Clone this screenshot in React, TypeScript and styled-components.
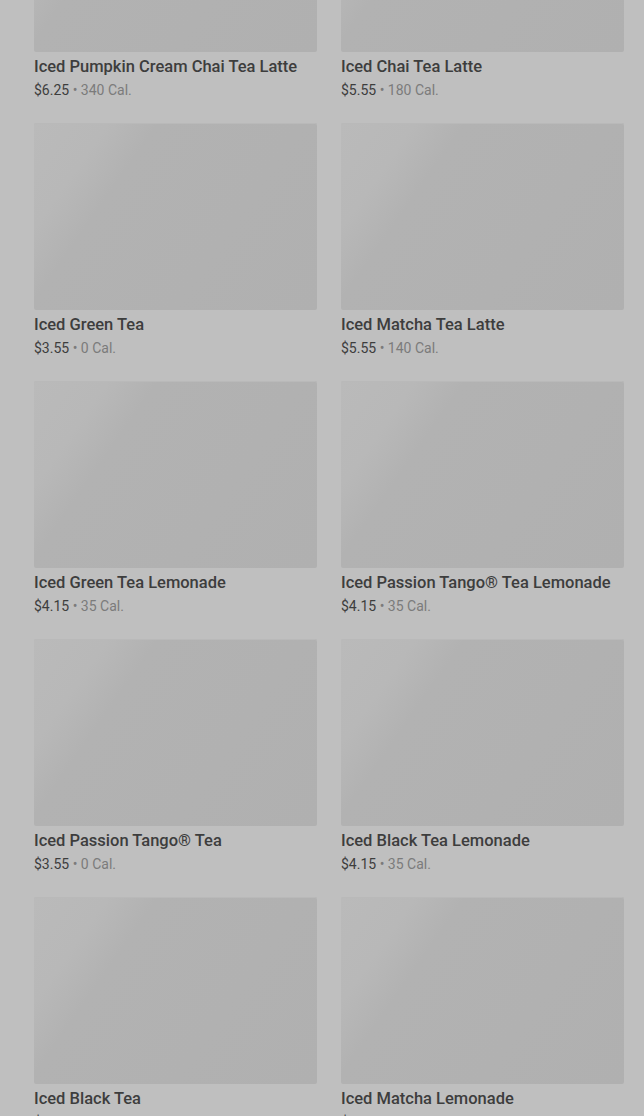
import React, { useLayoutEffect, useRef } from "react";
import styled, { createGlobalStyle } from "styled-components";

interface Drink {
    name: string,
    price: string,
    calories: number
}

const drinks: Drink[] = [
    { name: "Iced Pumpkin Cream Chai Tea Latte", price: "$6.25", calories: 340 },
    { name: "Iced Chai Tea Latte", price: "$5.55", calories: 180 },
    { name: "Iced Green Tea", price: "$3.55", calories: 0 },
    { name: "Iced Matcha Tea Latte", price: "$5.55", calories: 140 },
    { name: "Iced Green Tea Lemonade", price: "$4.15", calories: 35 },
    { name: "Iced Passion Tango® Tea Lemonade", price: "$4.15", calories: 35 },
    { name: "Iced Passion Tango® Tea", price: "$3.55", calories: 0 },
    { name: "Iced Black Tea Lemonade", price: "$4.15", calories: 35 },
    { name: "Iced Black Tea", price: "$3.55", calories: 0 },
    { name: "Iced Matcha Lemonade", price: "$4.15", calories: 35 },
];

const GlobalStyle = createGlobalStyle`
    html, body {
        margin: 0;
        padding: 0;
        background: #bfbfbf;
        font-family: Roboto, "Liberation Sans", Arial, sans-serif;
    }
`;

const Scroller = styled.div`
    height: 100vh;
    overflow: hidden;
    background: #bfbfbf;
`;

const Grid = styled.div`
    display: grid;
    grid-template-columns: 283px 283px;
    column-gap: 24px;
    row-gap: 23px;
    padding: 0 20px 40px 34px;
`;

const Card = styled.div`
    display: flex;
    flex-direction: column;
`;

const Thumb = styled.div`
    height: 187px;
    border-radius: 2px;
    background: linear-gradient(125deg, #bababa 0%, #b8b8b8 18%, #b2b2b2 30%, #b0b0b0 100%);
    box-shadow: inset 0 1px 0 #b9b9b9;
`;

const Title = styled.div`
    margin-top: 4px;
    font-size: 16.5px;
    line-height: 22px;
    font-weight: 500;
    color: #3d3d3d;
    white-space: nowrap;
`;

const Meta = styled.div`
    margin-top: 2px;
    font-size: 14px;
    line-height: 20px;
    color: #3d3d3d;
`;

const Cal = styled.span`
    color: #7b7b7b;
`;

const App = () => {
    const ref = useRef<HTMLDivElement>(null)

    useLayoutEffect(() => {
        // list is scrolled a little into the menu
        if (ref.current) ref.current.scrollTop = 135;
    }, []);

    return (
        <>
            <GlobalStyle />
            <Scroller ref={ref}>
                <Grid>
                    {drinks.map(d => (
                        <Card key={d.name}>
                            <Thumb />
                            <Title>{d.name}</Title>
                            <Meta>{d.price} <Cal>• {d.calories} Cal.</Cal></Meta>
                        </Card>
                    ))}
                </Grid>
            </Scroller>
        </>
    )
}

export default App
